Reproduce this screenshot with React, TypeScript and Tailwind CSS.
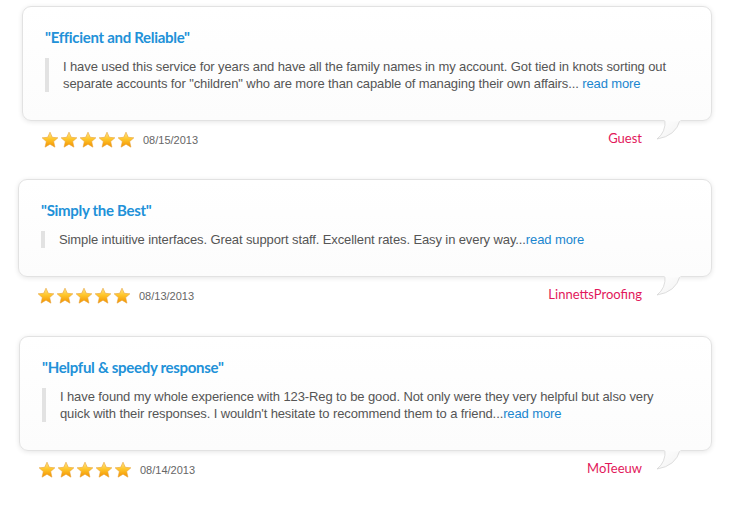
import React from "react";

type Review = {
  title: string;
  lines: string[];
  date: string;
  name: string;
  cls: string;
};

const reviews: Review[] = [
  {
    title: '"Efficient and Reliable"',
    lines: [
      "I have used this service for years and have all the family names in my account. Got tied in knots sorting out",
      'separate accounts for "children" who are more than capable of managing their own affairs... ',
    ],
    date: "08/15/2013",
    name: "Guest",
    cls: "ml-[22px] w-[690px]",
  },
  {
    title: '"Simply the Best"',
    lines: ["Simple intuitive interfaces. Great support staff. Excellent rates. Easy in every way..."],
    date: "08/13/2013",
    name: "LinnettsProofing",
    cls: "ml-[18px] w-[694px] mt-[30px]",
  },
  {
    title: '"Helpful & speedy response"',
    lines: [
      "I have found my whole experience with 123-Reg to be good. Not only were they very helpful but also very",
      "quick with their responses. I wouldn't hesitate to recommend them to a friend...",
    ],
    date: "08/14/2013",
    name: "MoTeeuw",
    cls: "ml-[19px] w-[693px] mt-[31px]",
  },
];

function Star({ id }: { id: string }) {
  return (
    <svg width="18" height="18" viewBox="0 0 24 24">
      <defs>
        <linearGradient id={id} x1="0" y1="0" x2="0" y2="1">
          <stop offset="0%" stopColor="#ffe68a" />
          <stop offset="45%" stopColor="#ffc72c" />
          <stop offset="100%" stopColor="#f39200" />
        </linearGradient>
      </defs>
      <path
        d="M12 1.5l3.1 6.9 7.4.7-5.6 5 1.7 7.4L12 17.6l-6.6 3.9 1.7-7.4-5.6-5 7.4-.7z"
        fill={`url(#${id})`}
        stroke="#e8a23a"
        strokeWidth="0.8"
        strokeLinejoin="round"
      />
    </svg>
  );
}

function Tail({ id }: { id: string }) {
  return (
    <svg
      className="absolute right-[26px] top-[-2px]"
      width="32"
      height="24"
      viewBox="0 0 32 24"
    >
      <defs>
        <linearGradient id={id} x1="0" y1="0" x2="1" y2="1">
          <stop offset="0%" stopColor="#ffffff" />
          <stop offset="100%" stopColor="#f2f2f2" />
        </linearGradient>
      </defs>
      <path
        d="M11 1 Q12 13 3 20 Q22 17 26 1 Z"
        fill={`url(#${id})`}
        stroke="#d6d6d6"
        strokeWidth="0.8"
      />
      <rect x="10.5" y="0" width="16" height="2.2" fill="#fcfcfc" />
    </svg>
  );
}

function ReviewBlock({ r, idx }: { r: Review; idx: number }) {
  return (
    <div className={`${r.cls} relative`}>
      <div className="rounded-[9px] border border-[#e2e2e2] bg-gradient-to-b from-white to-[#fcfcfc] shadow-[0_1px_5px_rgba(0,0,0,0.10)] pl-[22px] pt-[20px] pb-[28px]">
        <div
          className="text-[15px] leading-[20px] font-bold text-[#2191d8] tracking-[-0.3px]"
          style={{ fontFamily: "Lato, 'Open Sans', sans-serif" }}
        >
          {r.title}
        </div>
        <div className="mt-[11px] flex">
          <div className="w-[4px] bg-[#e2e2e2]" />
          <div
            className="pl-[14px] text-[13px] leading-[17px] text-[#555555] tracking-[-0.11px]"
            style={{ fontFamily: "'Liberation Sans', Arial, sans-serif" }}
          >
            {r.lines.map((l, i) => (
              <div key={i} className="whitespace-nowrap">
                {l}
                {i === r.lines.length - 1 && (
                  <span className="text-[#1a86cf]">read more</span>
                )}
              </div>
            ))}
          </div>
        </div>
      </div>
      <div className="relative h-[28px]">
        <Tail id={`tail-${idx}`} />
        <div className="absolute left-[19px] top-[10px] flex items-center">
          <div className="flex gap-[1px]">
            {[0, 1, 2, 3, 4].map((s) => (
              <Star key={s} id={`st-${idx}-${s}`} />
            ))}
          </div>
          <span
            className="ml-[8px] text-[11px] text-[#666666]"
            style={{ fontFamily: "'Liberation Sans', Arial, sans-serif" }}
          >
            {r.date}
          </span>
        </div>
        <div
          className="absolute right-[70px] top-[8px] text-[13px] leading-[18px] text-[#e2185b]"
          style={{ fontFamily: "Lato, 'Open Sans', sans-serif" }}
        >
          {r.name}
        </div>
      </div>
    </div>
  );
}

export default function App() {
  return (
    <div className="w-[738px] h-[506px] bg-white overflow-hidden pt-[6px]">
      <div className="flex flex-col">
        {reviews.map((r, i) => (
          <ReviewBlock key={i} r={r} idx={i} />
        ))}
      </div>
    </div>
  );
}
